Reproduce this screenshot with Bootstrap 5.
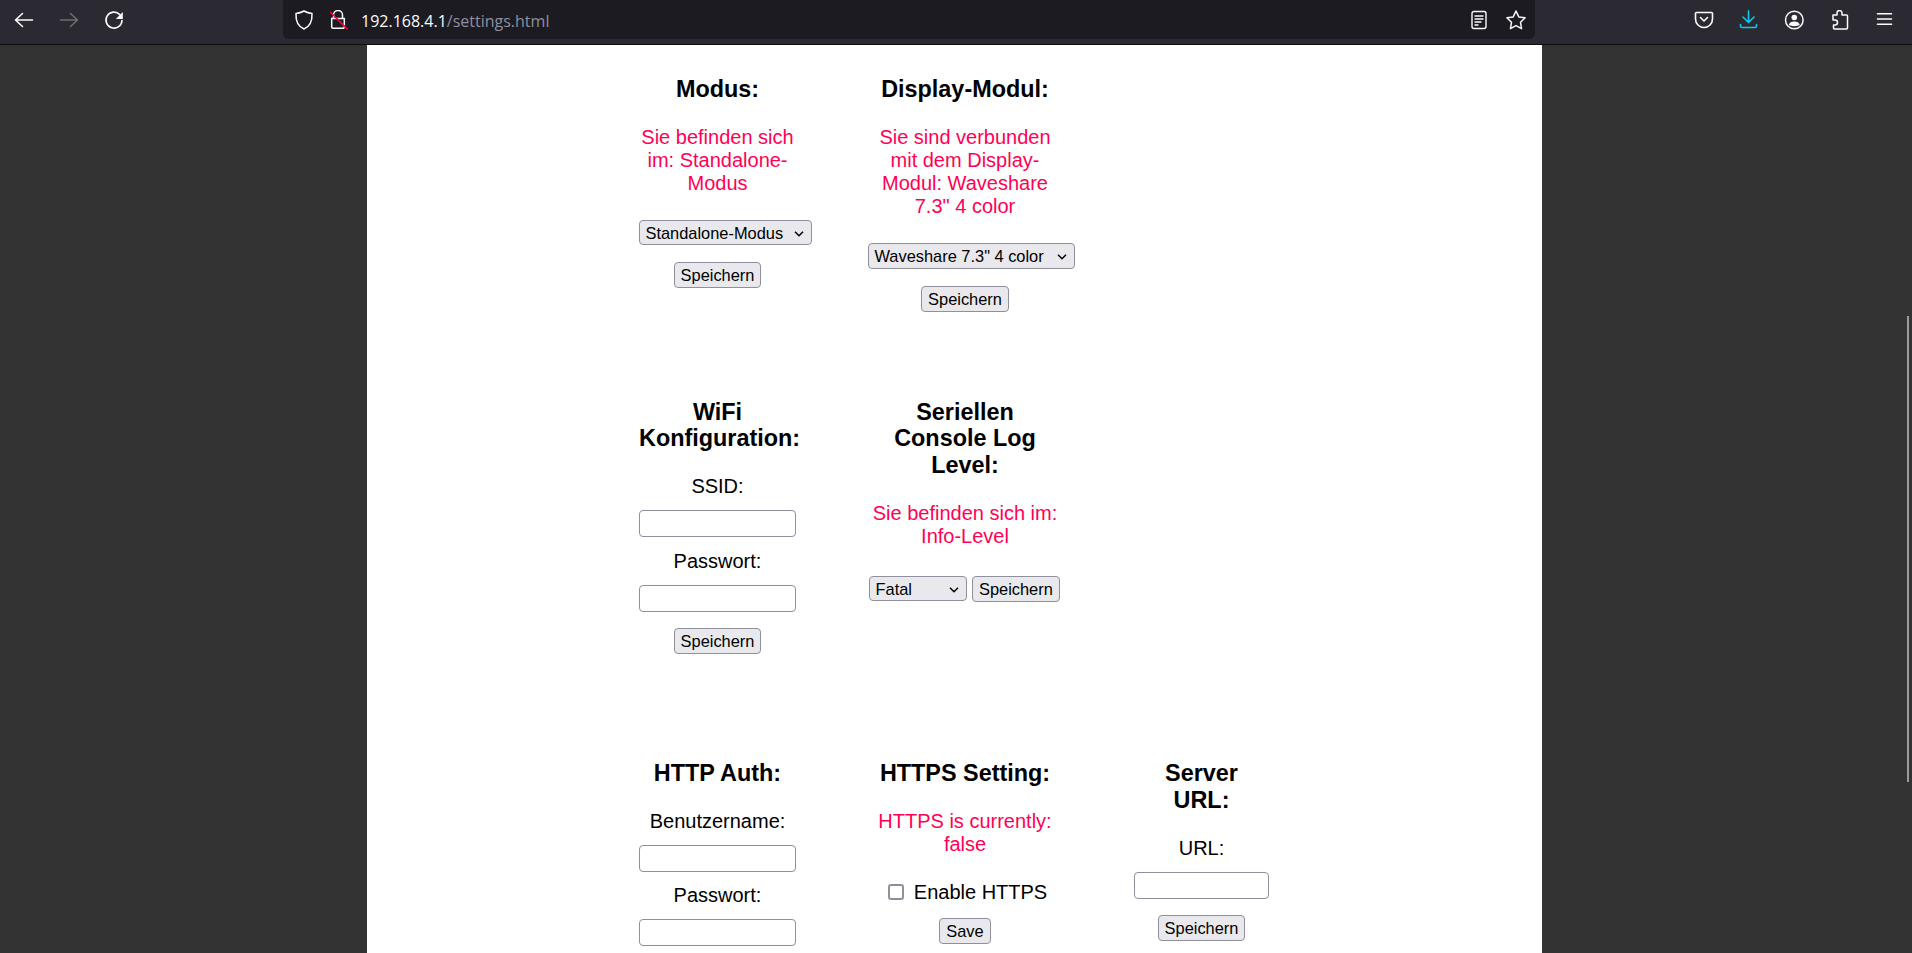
<!doctype html>
<html lang="de">
<head>
<meta charset="utf-8">
<title>settings</title>
<link href="https://cdn.jsdelivr.net/npm/bootstrap@5.3.0/dist/css/bootstrap.min.css" rel="stylesheet">
<style>
html,body{height:953px;overflow:hidden;background:#333;}
body{font-family:"Liberation Sans",Arial,sans-serif;font-size:20px;line-height:23px;color:#000;}
.ffbar{height:45px;background:#2b2a33;border-bottom:1px solid #0c0c0d;}
.ffnav{width:283px;height:39px;padding-left:14px;gap:25px;}
.ffurl{width:1252px;height:39px;background:#1c1b22;border-radius:0 0 6px 6px;padding:0 8px 0 11px;}
.ffhost{font-family:"Open Sans",sans-serif;font-size:16px;line-height:19px;color:#fbfbfe;margin-left:11px;margin-top:3px;white-space:nowrap;}
.ffpath{color:#8f8f9d;}
.fftools{height:39px;padding-left:159px;gap:25px;}
.ffbar svg,.ffurl svg{display:block;flex:none;}
.pagebox{width:1175px;height:908px;margin-left:367px;background:#fff;padding:31px 0 0 272px;overflow:hidden;}
.gridline{display:flex;gap:72px;align-items:flex-start;}
.line1{height:322.5px;}
.line2{height:361.5px;}
.c1{width:157px;flex:none;}
.c2{width:194px;flex:none;}
.c3{width:135px;flex:none;}
.setcell{text-align:center;}
.setcell h3{font-size:23.4px;line-height:26.8px;font-weight:700;margin:0 0 23.2px;font-family:inherit;}
.setcell p{margin:0 0 20px;line-height:23px;}
.statusmsg{color:#ff0055;}
.setcell p.setfield,.setfield{display:block;margin:0 0 12px;}
input.setfield{margin-bottom:12.5px;}
.ffselect,.ffbtn,.ffinput{font-family:"Liberation Sans",Arial,sans-serif;font-size:16.4px;line-height:18px;color:#000;border:1px solid #8f8f9d;border-radius:4px;box-sizing:border-box;}
.ffselect,.ffbtn{background:#e9e9ed;}
.ffselect{display:block;height:25px;line-height:25px;padding:0 0 0 5.5px;text-align:left;position:relative;white-space:nowrap;}
.ffselect svg{position:absolute;top:10px;right:7px;}
.ffbtn{display:inline-block;height:26px;padding:0 6px;white-space:nowrap;}
.btngap{margin-top:3.5px;}
.ffinput{display:block;width:100%;height:27px;background:#fff;padding:0 4px;}
.sel1{width:173px;margin:25px 0 17px;}
.sel2{width:207px;margin:25px 0 17px;height:26px;}
.sel3{width:98px;height:25px;}
.logrow{display:flex;gap:5px;align-items:flex-start;margin-top:28px;padding-left:1px;}
.checkline{display:flex;align-items:center;justify-content:center;gap:10px;margin:25px 0 14px;padding-left:5px;}
.ffcheck{width:16px;height:16px;border:2px solid #8f8f9d;border-radius:3px;background:#fff;margin:0;appearance:none;-webkit-appearance:none;flex:none;}
.fakebar{position:fixed;left:1907px;top:316px;width:2px;height:466px;background:#9a9a9a;}
</style>
</head>
<body>
<header class="ffbar d-flex align-items-start">
  <nav class="ffnav d-flex align-items-center">
    <svg width="20" height="20" viewBox="0 0 20 20" fill="none" stroke="#fbfbfe" stroke-width="1.6" stroke-linecap="round" stroke-linejoin="round"><path d="M1.500 10h17M8.500 3.500L1.500 10l7 6.500"/></svg>
    <svg width="20" height="20" viewBox="0 0 20 20" fill="none" stroke="#6e6d73" stroke-width="1.6" stroke-linecap="round" stroke-linejoin="round"><path d="M18.500 10h-17M11.500 3.500l7 6.500-7 6.500"/></svg>
    <svg width="20" height="20" viewBox="0 0 20 20" fill="none" stroke="#fbfbfe" stroke-width="1.6" stroke-linecap="round"><path d="M15.800 4.600A8 8 0 1 0 18 10.500"/><path fill="#fbfbfe" stroke="none" d="M18.800 2v7h-7z"/></svg>
  </nav>
  <div class="ffurl d-flex align-items-center">
    <svg width="20" height="20" viewBox="0 0 20 20" fill="none" stroke="#fbfbfe" stroke-width="1.5" stroke-linejoin="round"><path d="M10 1c2.500 1.400 5 2.100 8 2.400.4 7.200-2 13-8 15.600C4 16.400 1.600 10.600 2 3.400 5 3.100 7.500 2.400 10 1z"/></svg>
    <svg class="ms-3" width="20" height="20" viewBox="0 0 20 20" fill="none" stroke-width="1.500"><path stroke="#fbfbfe" d="M3.500 8.500V5a4.500 4.500 0 0 1 9 0v3.500M1.700 8.500h12.600v8.500a1.200 1.200 0 0 1-1.200 1.200H2.900a1.200 1.200 0 0 1-1.200-1.200z"/><path stroke="#ff0039" stroke-width="1.700" stroke-linecap="round" d="M.8 2.500L17 18.800"/></svg>
    <div class="ffhost">192.168.4.1<span class="ffpath">/settings.html</span></div>
    <div class="ms-auto d-flex align-items-center gap-3">
      <svg width="20" height="20" viewBox="0 0 20 20" fill="none" stroke="#fbfbfe" stroke-width="1.4" stroke-linecap="round"><rect x="3" y="1.500" width="14" height="17" rx="2"/><path d="M6 6h8M6 9h8M6 12h6M6 15h3"/></svg>
      <svg class="ms-n1" width="22" height="22" viewBox="0 0 22 22" fill="none" stroke="#fbfbfe" stroke-width="1.500" stroke-linejoin="round"><path d="M11 2l2.800 5.900 6.300.9-4.600 4.500 1.100 6.400L11 16.700l-5.600 3 1.100-6.400L1.900 8.800l6.300-.9z"/></svg>
    </div>
  </div>
  <div class="fftools d-flex align-items-center">
    <svg width="20" height="20" viewBox="0 0 20 20" fill="none" stroke="#fbfbfe" stroke-width="1.600" stroke-linecap="round" stroke-linejoin="round"><path d="M2.500 2.500h15a1 1 0 0 1 1 1V9a8.500 8.500 0 0 1-17 0V3.500a1 1 0 0 1 1-1z"/><path d="M6.500 7.500L10 11l3.500-3.500"/></svg>
    <svg width="20" height="20" viewBox="0 0 20 20" fill="none" stroke="#0cc8ee" stroke-width="1.600" stroke-linecap="round" stroke-linejoin="round"><path d="M9.500 .8v11.700M4 7l5.500 5.500L15 7M1.500 14.500v1.500a1.500 1.500 0 0 0 1.500 1.500h13a1.500 1.500 0 0 0 1.500-1.500v-1.500"/></svg>
    <svg width="20" height="20" viewBox="0 0 20 20" fill="none" stroke="#fbfbfe" stroke-width="1.500"><circle cx="10.300" cy="10" r="8.800"/><circle cx="10.300" cy="7.500" r="2.800" fill="#fbfbfe" stroke="none"/><path fill="#fbfbfe" stroke="none" d="M4.800 15c.6-2.500 2.500-3.500 5.500-3.500s4.900 1 5.500 3.500c-3 1.500-8 1.500-11 0z"/></svg>
    <svg width="20" height="20" viewBox="0 0 20 20" fill="none" stroke="#fbfbfe" stroke-width="1.500" stroke-linejoin="round"><path d="M4 5h4V3a2.500 2.500 0 0 1 5 0v2h4.500a1 1 0 0 1 1 1v12a1 1 0 0 1-1 1H5.500a1 1 0 0 1-1-1v-3h1.500a2.500 2.500 0 0 0 0-5H4z"/></svg>
    <svg width="20" height="20" viewBox="0 0 20 20" fill="none" stroke="#fbfbfe" stroke-width="1.600" stroke-linecap="round"><path d="M3.500 3.800h14M3.500 9h14M3.500 14.200h14"/></svg>
  </div>
</header>
<main class="pagebox">
  <section class="gridline line1">
    <div class="setcell c1">
      <h3>Modus:</h3>
      <p class="statusmsg">Sie befinden sich<br>im: Standalone-<br>Modus</p>
      <div class="ffselect sel1">Standalone-Modus<svg width="10" height="6" viewBox="0 0 10 6" fill="none" stroke="#000" stroke-width="1.500"><path d="M1 .8l4 4 4-4"/></svg></div>
      <button class="ffbtn" type="button">Speichern</button>
    </div>
    <div class="setcell c2">
      <h3>Display-Modul:</h3>
      <p class="statusmsg">Sie sind verbunden<br>mit dem Display-<br>Modul: Waveshare<br>7.3" 4 color</p>
      <div class="ffselect sel2">Waveshare 7.3" 4 color<svg width="10" height="6" viewBox="0 0 10 6" fill="none" stroke="#000" stroke-width="1.500"><path d="M1 .8l4 4 4-4"/></svg></div>
      <button class="ffbtn" type="button">Speichern</button>
    </div>
  </section>
  <section class="gridline line2">
    <div class="setcell c1">
      <h3>WiFi<br>Konfiguration:</h3>
      <p class="setfield">SSID:</p>
      <input class="ffinput setfield" type="text" aria-label="SSID">
      <p class="setfield">Passwort:</p>
      <input class="ffinput setfield" type="password" aria-label="Passwort">
      <button class="ffbtn btngap" type="button">Speichern</button>
    </div>
    <div class="setcell c2">
      <h3>Seriellen<br>Console Log<br>Level:</h3>
      <p class="statusmsg mb-0">Sie befinden sich im:<br>Info-Level</p>
      <div class="logrow">
        <div class="ffselect sel3">Fatal<svg width="10" height="6" viewBox="0 0 10 6" fill="none" stroke="#000" stroke-width="1.500"><path d="M1 .8l4 4 4-4"/></svg></div>
        <button class="ffbtn" type="button">Speichern</button>
      </div>
    </div>
  </section>
  <section class="gridline">
    <div class="setcell c1">
      <h3>HTTP Auth:</h3>
      <p class="setfield">Benutzername:</p>
      <input class="ffinput setfield" type="text" aria-label="Benutzername">
      <p class="setfield">Passwort:</p>
      <input class="ffinput setfield" type="password" aria-label="Passwort">
    </div>
    <div class="setcell c2">
      <h3>HTTPS Setting:</h3>
      <p class="statusmsg mb-0">HTTPS is currently:<br>false</p>
      <div class="checkline"><input class="ffcheck" type="checkbox" aria-label="Enable HTTPS"><span>Enable HTTPS</span></div>
      <button class="ffbtn" type="button">Save</button>
    </div>
    <div class="setcell c3">
      <h3>Server<br>URL:</h3>
      <p class="setfield">URL:</p>
      <input class="ffinput setfield" type="text" aria-label="URL">
      <button class="ffbtn btngap" type="button">Speichern</button>
    </div>
  </section>
</main>
<div class="fakebar"></div>
<script src="https://cdn.jsdelivr.net/npm/bootstrap@5.3.0/dist/js/bootstrap.bundle.min.js"></script>
</body>
</html>
